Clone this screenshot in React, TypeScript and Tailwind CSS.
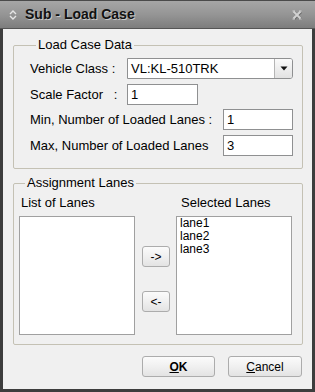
import React from "react";

const font = { fontFamily: '"Liberation Sans", Arial, sans-serif' };

function Input({ value, w }: { value: string; w: string }) {
  return (
    <div className={`${w} h-[21px] border border-[#8f9091] bg-white flex items-center pl-[3px] text-[13px] text-black leading-none`}>
      {value}
    </div>
  );
}

function Btn({ children, w }: { children: React.ReactNode; w: string }) {
  return (
    <div className={`${w} h-[21px] rounded-[3px] border border-[#acacac] bg-gradient-to-b from-[#fbfbfb] via-[#f0f0f0] to-[#e3e3e3] flex items-center justify-center text-[12px] text-black leading-none`}>
      {children}
    </div>
  );
}

export default function App() {
  return (
    <div className="w-[315px] h-[392px] flex flex-col bg-[#3d3d3d] select-none" style={font}>
      {/* Title bar */}
      <div className="h-[29px] shrink-0 flex items-center bg-gradient-to-b from-[#a6a6a6] via-[#959595] to-[#7d7d7d] border-t border-[#4a4a4a] border-b border-b-[#555555]">
        <svg width="10" height="12" viewBox="0 0 10 12" className="ml-[8px]">
          <path d="M2 5 L5 2 L8 5" fill="none" stroke="#e6e6e6" strokeWidth="1.4" />
          <path d="M2 7 L5 10 L8 7" fill="none" stroke="#e6e6e6" strokeWidth="1.4" />
        </svg>
        <span className="ml-[7px] text-[14px] font-bold text-[#111] [text-shadow:1px_1px_0_#c8c8c8]">Sub - Load Case</span>
        <svg width="12" height="12" viewBox="0 0 12 12" className="ml-auto mr-[12px]">
          <path d="M2.5 2.5 L9.5 9.5 M9.5 2.5 L2.5 9.5" stroke="#6a6a6a" strokeWidth="2.4" transform="translate(0.6,0.6)" />
          <path d="M2.5 2.5 L9.5 9.5 M9.5 2.5 L2.5 9.5" stroke="#d2d2d2" strokeWidth="2" />
          <path d="M1.5 2 H4 M8 2 H10.5 M1.5 10 H4 M8 10 H10.5" stroke="#d2d2d2" strokeWidth="1" />
        </svg>
      </div>

      {/* Body */}
      <div className="flex-1 mx-[3px] mb-[3px] bg-[#f0f0f0] flex flex-col pl-[10px] pr-[10px] text-[13px] text-black">
        {/* Group 1 */}
        <fieldset className="mt-[9px] border border-[#c4c1b4] rounded-[2px] pl-[16px] pr-[9px] pb-[12px]">
          <legend className="ml-[6px] px-[2px] h-[14px] leading-[14px] text-[13px]">Load Case Data</legend>
          <div className="mt-[6px] flex items-center h-[21px]">
            <span className="w-[97px]">Vehicle Class :</span>
            <div className="w-[166px] h-[21px] border border-[#8f9091] bg-white flex items-stretch rounded-r-[3px]">
              <div className="flex-1 flex items-center pl-[3px] leading-none">VL:KL-510TRK</div>
              <div className="w-[18px] border-l border-[#b5b5b5] rounded-r-[2px] bg-gradient-to-b from-[#fafafa] to-[#e2e2e2] flex items-center justify-center">
                <svg width="8" height="5" viewBox="0 0 8 5">
                  <path d="M0.5 0.5 H7.5 L4 4.5 Z" fill="#111" />
                </svg>
              </div>
            </div>
          </div>
          <div className="mt-[5px] flex items-center h-[21px]">
            <span className="w-[97px] whitespace-pre">Scale Factor   :</span>
            <Input value="1" w="w-[71px]" />
          </div>
          <div className="mt-[4px] flex items-center h-[21px]">
            <span className="w-[193px]">Min, Number of Loaded Lanes :</span>
            <Input value="1" w="w-[70px]" />
          </div>
          <div className="mt-[5px] flex items-center h-[21px]">
            <span className="w-[193px]">Max, Number of Loaded Lanes</span>
            <Input value="3" w="w-[70px]" />
          </div>
        </fieldset>

        {/* Group 2 */}
        <fieldset className="mt-[7px] border border-[#c4c1b4] rounded-[2px] pl-[5px] pr-[10px] pb-[9px]">
          <legend className="ml-[6px] px-[2px] h-[14px] leading-[14px] text-[13px]">Assignment Lanes</legend>
          <div className="flex">
            <div className="w-[116px] flex flex-col">
              <div className="mt-[6px] h-[14px] leading-[14px] pl-[2px]">List of Lanes</div>
              <div className="mt-[6px] h-[119px] border border-[#a0a0a0] bg-white" />
            </div>
            <div className="w-[28px] ml-[7px] flex flex-col">
              <div className="mt-[56px]">
                <Btn w="w-[28px]">-&gt;</Btn>
              </div>
              <div className="mt-[24px]">
                <Btn w="w-[28px]">&lt;-</Btn>
              </div>
            </div>
            <div className="w-[116px] ml-[6px] flex flex-col">
              <div className="mt-[6px] h-[14px] leading-[14px] pl-[5px]">Selected Lanes</div>
              <div className="mt-[6px] h-[119px] border border-[#a0a0a0] bg-white pl-[3px] pt-[0px] text-[12px] leading-[13px]">
                <div>lane1</div>
                <div>lane2</div>
                <div>lane3</div>
              </div>
            </div>
          </div>
        </fieldset>

        {/* Buttons */}
        <div className="mt-[11px] flex justify-end gap-[13px]">
          <Btn w="w-[73px]">
            <span className="font-bold"><span className="underline">O</span>K</span>
          </Btn>
          <Btn w="w-[74px]">
            <span><span className="underline">C</span>ancel</span>
          </Btn>
        </div>
      </div>
    </div>
  );
}
